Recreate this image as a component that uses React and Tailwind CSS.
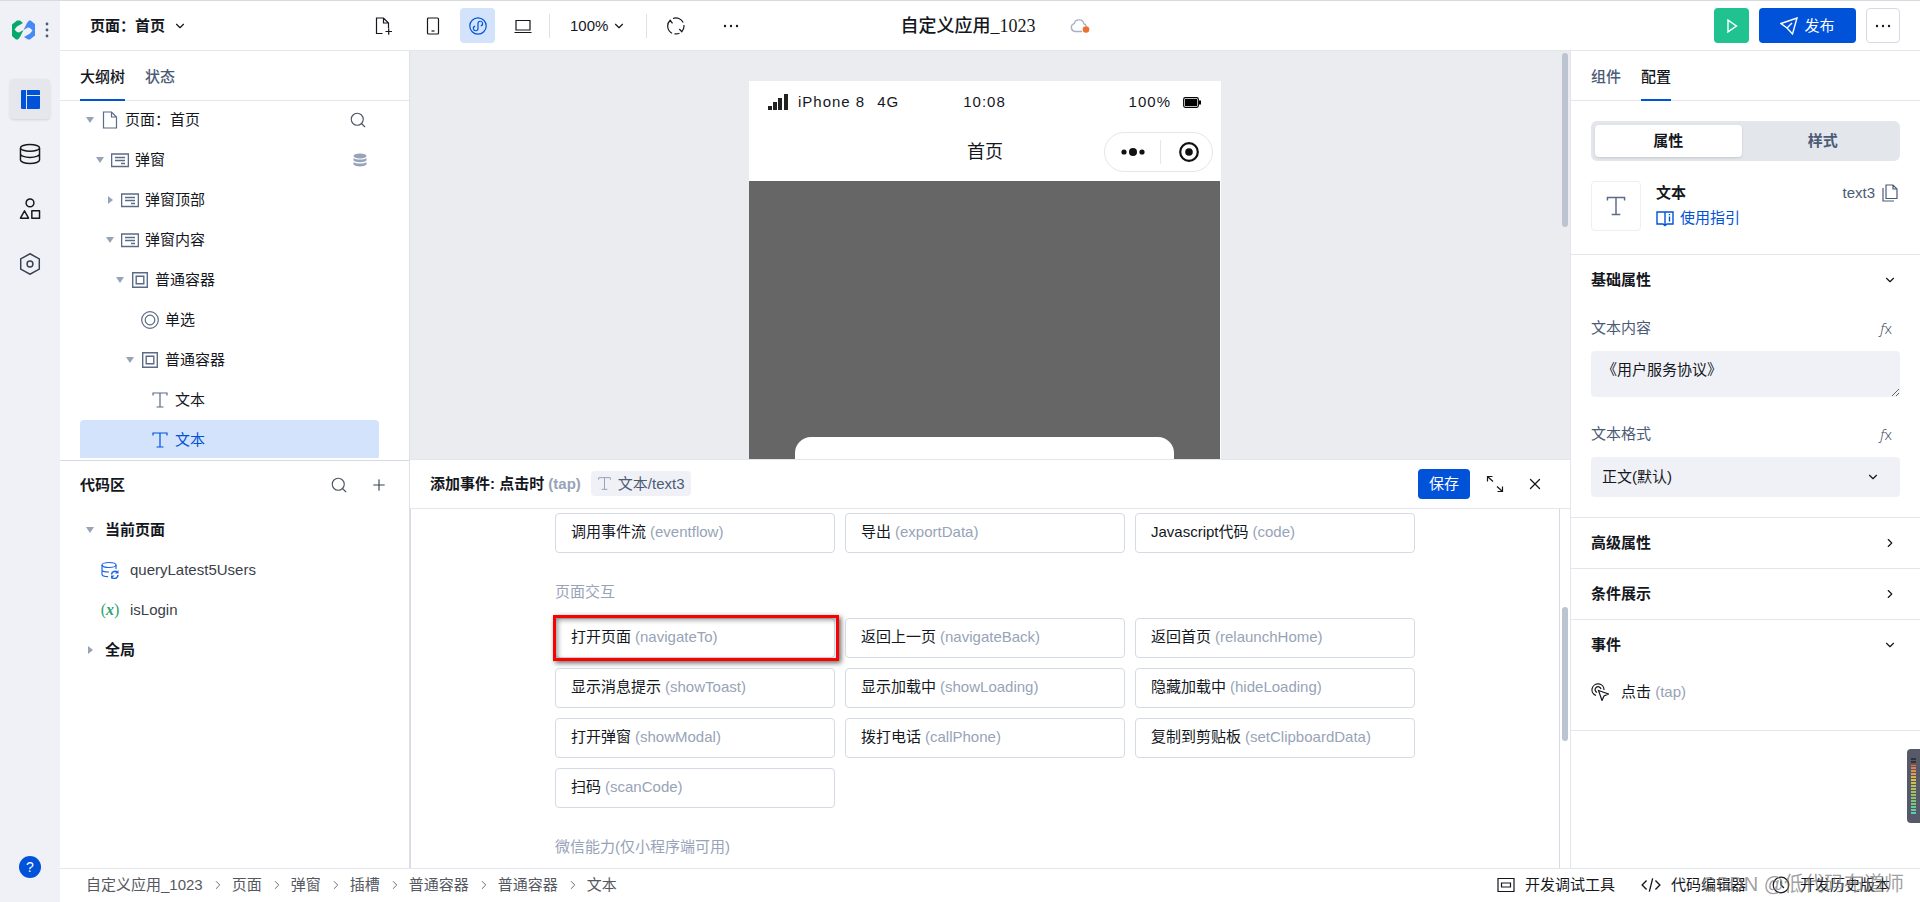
import {
  ChevronDown,
  ChevronRight,
  Plus,
  Search,
  X,
} from "lucide-react";

const tree = [
  { level: 0, icon: "page", label: "页面：首页", caret: "down", action: "search" },
  { level: 1, icon: "slot", label: "弹窗", caret: "down", action: "data" },
  { level: 2, icon: "slot", label: "弹窗顶部", caret: "right" },
  { level: 2, icon: "slot", label: "弹窗内容", caret: "down" },
  { level: 3, icon: "box", label: "普通容器", caret: "down" },
  { level: 4, icon: "radio", label: "单选" },
  { level: 4, icon: "box", label: "普通容器", caret: "down" },
  { level: 5, icon: "text", label: "文本" },
  { level: 5, icon: "text", label: "文本", active: true },
];

const flowActions = [
  ["调用事件流", "eventflow"],
  ["导出", "exportData"],
  ["Javascript代码", "code"],
];

const pageActions = [
  ["打开页面", "navigateTo"],
  ["返回上一页", "navigateBack"],
  ["返回首页", "relaunchHome"],
  ["显示消息提示", "showToast"],
  ["显示加载中", "showLoading"],
  ["隐藏加载中", "hideLoading"],
  ["打开弹窗", "showModal"],
  ["拨打电话", "callPhone"],
  ["复制到剪贴板", "setClipboardData"],
  ["扫码", "scanCode"],
];

const crumbs = ["自定义应用_1023", "页面", "弹窗", "插槽", "普通容器", "普通容器", "文本"];

const Caret = ({ dir }) => (
  <svg width="8" height="8" viewBox="0 0 8 8" className="fill-[#97a3b7]">
    {dir === "down" ? <path d="M0 1h8L4 7z" /> : <path d="M2 0v8l5-4z" />}
  </svg>
);

const Icon = ({ size = 18, children, className = "" }) => (
  <svg
    width={size}
    height={size}
    viewBox="0 0 18 18"
    fill="none"
    stroke="currentColor"
    strokeWidth="1.2"
    className={className}
  >
    {children}
  </svg>
);

const TextIcon = ({ size, className }) => (
  <Icon size={size} className={className}>
    <path d="M2 4.5V2h14v2.5M9 2v14M5.5 16h7" />
  </Icon>
);

const treeIcons = {
  page: (
    <Icon>
      <path d="M2.5 1h8L15.5 6v11h-13zM10.5 1v5h5" />
    </Icon>
  ),
  slot: (
    <Icon>
      <path d="M.6 3h16.8v12.5H.6zM4 6.5h10M4 9.5h10M10 12.5h4" strokeWidth="1.4" />
    </Icon>
  ),
  box: (
    <Icon>
      <path d="M1.7 1.7h14.6v14.6H1.7zM5.2 5.2h7.6v7.6H5.2z" strokeWidth="1.4" />
    </Icon>
  ),
  radio: (
    <Icon>
      <circle cx="9" cy="9" r="8.3" />
      <circle cx="9" cy="9" r="4.8" />
    </Icon>
  ),
  text: <TextIcon />,
};

const Rail = () => (
  <nav className="flex w-[60px] shrink-0 flex-col items-center bg-[#f0f1f6] pb-6">
    <div className="flex h-[57px] w-full items-center gap-[10px] pl-3">
      <svg width="23" height="20" viewBox="0 0 23 20">
        <path d="M0 4.500 5 .5h3l3 2.500-6 3.500L2.500 9.500 5 12l2 .5 4.500-2.500L8 17l-2 2.500H4L0 16z" fill="#07a86b" />
        <path d="M23 15.500l-5 4h-2l-4-2.500 6-3.500 2.500-3L18 8l-2-.5-4.500 2.500L15 3l2-2.500h1.500L23 4z" fill="#468af5" />
      </svg>
      <svg width="4" height="16" viewBox="0 0 4 16" fill="#4b5b76">
        <circle cx="2" cy="2" r="1.4" />
        <circle cx="2" cy="8" r="1.4" />
        <circle cx="2" cy="14" r="1.4" />
      </svg>
    </div>
    <div className="mt-[21px] flex flex-col gap-[15px]">
      <button
        aria-label="页面设计"
        className="flex h-10 w-10 items-center justify-center rounded bg-[#e5e7ed] shadow"
      >
        <svg width="19" height="19" viewBox="0 0 19 19" fill="#0052d9">
          <path d="M1 0h4v19H1a1 1 0 0 1-1-1V1a1 1 0 0 1 1-1zM6 0h12a1 1 0 0 1 1 1v4H6zM6 6h13v12a1 1 0 0 1-1 1H6z" />
        </svg>
      </button>
      <button aria-label="数据" className="flex h-10 w-10 items-center justify-center">
        <Icon size={22}>
          <ellipse cx="9" cy="4" rx="7.800" ry="2.800" />
          <path d="M1.200 4v10c0 1.500 3.500 2.800 7.800 2.800s7.800-1.300 7.800-2.800V4M1.200 9c0 1.500 3.500 2.800 7.800 2.800s7.800-1.300 7.800-2.800" />
        </Icon>
      </button>
      <button aria-label="组件" className="flex h-10 w-10 items-center justify-center">
        <Icon size={22}>
          <circle cx="9" cy="4" r="3.200" />
          <path d="M4.500 10.500 1.200 16.500h6.600zM10.500 10.500h6.300v6h-6.300z" strokeLinejoin="round" />
        </Icon>
      </button>
      <button aria-label="设置" className="flex h-10 w-10 items-center justify-center">
        <Icon size={22} className="text-gray-700">
          <path d="M9 .6l7.600 4.200v8.400L9 17.400l-7.600-4.200V4.800z" />
          <circle cx="9" cy="9" r="2.400" />
        </Icon>
      </button>
    </div>
    <button
      aria-label="帮助"
      className="mt-auto flex h-[22px] w-[22px] items-center justify-center rounded-full bg-[#0052d9] text-sm text-white"
    >
      ?
    </button>
  </nav>
);

const ToolButton = ({ label, active, children }) => (
  <button
    aria-label={label}
    className={
      active
        ? "flex h-[35px] w-[35px] items-center justify-center rounded bg-[#d4e3fc] text-[#0052d9]"
        : "flex h-[35px] w-[35px] items-center justify-center rounded"
    }
  >
    {children}
  </button>
);

const Dots = () => (
  <svg width="16" height="4" viewBox="0 0 16 4" fill="currentColor">
    <circle cx="2" cy="2" r="1.2" />
    <circle cx="8" cy="2" r="1.2" />
    <circle cx="14" cy="2" r="1.2" />
  </svg>
);

const Header = () => (
  <header className="grid h-[50px] shrink-0 grid-cols-[1fr_auto_1fr] items-center border-b border-[#e3e6eb] bg-white pr-5 pl-[30px]">
    <div className="flex items-center">
      <button className="flex w-[276px] items-center gap-2 font-semibold">
        页面：首页
        <ChevronDown size={14} strokeWidth={2} />
      </button>
      <ToolButton label="新建页面">
        <Icon>
          <path d="M7.500 16.500H1.500V1h7L13.500 6v5M8.500 1v5h5M10.500 14.500h6.500M13.700 11.300v6.400" />
        </Icon>
      </ToolButton>
      <div className="ml-[14px] flex gap-[10px]">
        <ToolButton label="手机">
          <Icon>
            <rect x="3.500" y="1" width="11" height="16" rx="1" />
            <path d="M7.500 14h3" />
          </Icon>
        </ToolButton>
        <ToolButton label="小程序" active>
          <Icon>
            <circle cx="9" cy="9" r="8.200" />
            <path d="M9 11.500V6.500a2.300 2.300 0 1 1 2.800 2.300M9 6.500v5a2.300 2.300 0 1 1-2.800-2.300" />
          </Icon>
        </ToolButton>
        <ToolButton label="电脑">
          <Icon>
            <path d="M2 3.500h14v9.500H2zM.5 15.500h17" />
          </Icon>
        </ToolButton>
      </div>
      <span className="ml-[9px] h-6 w-px bg-[#dde0e7]" />
      <button className="ml-5 flex items-center gap-1">
        100%
        <ChevronDown size={14} strokeWidth={2} />
      </button>
      <span className="ml-5 h-6 w-px bg-[#dde0e7]" />
      <div className="ml-[11px] flex gap-5">
        <ToolButton label="刷新">
          <Icon>
            <path d="M5 16.200A8 8 0 0 1 3.200 3.300M6 1.500a8 8 0 0 1 10.200 4M16.900 8a8 8 0 0 1-2.100 6.700M12.500 16.200a8 8 0 0 1-5 .6M1 6.300 3.200 3.300l2.300 3M16.700 11.500l-1.900 3.200-2.500-2.700" />
          </Icon>
        </ToolButton>
        <ToolButton label="更多工具">
          <Dots />
        </ToolButton>
      </div>
    </div>
    <div className="flex items-center gap-[34px]">
      <h1 className="font-['Liberation_Serif','Noto_Sans_CJK_SC',serif] text-lg font-medium">
        自定义应用_1023
      </h1>
      <svg width="20" height="16" viewBox="0 0 20 16">
        <path
          d="M12 13.500H5a4 4 0 0 1-.8-7.800A5 5 0 0 1 14 6a3.500 3.500 0 0 1 2.300 2"
          fill="none"
          stroke="#a6b1c5"
          strokeWidth="1.4"
        />
        <circle cx="16" cy="11.500" r="3.300" fill="#ed7033" />
      </svg>
    </div>
    <div className="flex justify-end gap-[10px]">
      <button
        aria-label="预览"
        className="flex h-[35px] w-[35px] items-center justify-center rounded bg-[#20c290] text-white"
      >
        <Icon size={16}>
          <path d="M4.500 2.500v13L14 9z" strokeWidth="1.6" />
        </Icon>
      </button>
      <button className="flex h-[35px] w-[97px] items-center justify-center gap-[6px] rounded bg-[#0052d9] text-white">
        <Icon>
          <path d="M1 6.500 17 1l-4.500 16L7 11zM7 11l5-5" strokeWidth="1.4" />
        </Icon>
        发布
      </button>
      <button
        aria-label="更多"
        className="flex h-[35px] w-[34px] items-center justify-center rounded border border-[#d5dae4]"
      >
        <Dots />
      </button>
    </div>
  </header>
);

const Tabs = ({ items, active }) => (
  <div className="flex h-[50px] shrink-0 gap-5 border-b border-[#e3e6eb] px-5">
    {items.map((item) => (
      <button
        key={item}
        className={
          item === active
            ? "-mb-px border-b-2 border-[#0052d9] pt-[3px] font-medium"
            : "-mb-px border-b-2 border-transparent pt-[3px] font-medium text-[#4b5b76]"
        }
      >
        {item}
      </button>
    ))}
  </div>
);

const TreeRow = ({ level, icon, label, caret, action, active }) => (
  <li
    className={
      active
        ? "flex h-10 items-center rounded bg-[#d4e3fc] pr-3 text-[#0052d9]"
        : "flex h-10 items-center pr-3"
    }
    style={{ paddingLeft: level * 10 }}
  >
    <span className="flex w-5 justify-center">{caret && <Caret dir={caret} />}</span>
    <span className={active ? "mr-[5px] flex w-5 justify-center" : "mr-[5px] flex w-5 justify-center text-[#5b6b86]"}>
      {treeIcons[icon]}
    </span>
    {label}
    {action === "search" && (
      <button aria-label="搜索组件" className="ml-auto text-gray-600">
        <Search size={18} strokeWidth={1.5} />
      </button>
    )}
    {action === "data" && (
      <svg width="14" height="14" viewBox="0 0 14 14" className="ml-auto fill-[#97a3b7]">
        <ellipse cx="7" cy="3" rx="6.500" ry="2.500" />
        <path d="M.5 5c2 2 11 2 13 0v2.500c-2 2.300-11 2.300-13 0zM.5 9c2 2 11 2 13 0v2.500c-2 2.500-11 2.500-13 0z" />
      </svg>
    )}
  </li>
);

const Sidebar = () => (
  <aside className="flex w-[350px] shrink-0 flex-col border-r border-[#dde0e7] bg-white">
    <section className="flex h-1/2 flex-col overflow-hidden">
      <Tabs items={["大纲树", "状态"]} active="大纲树" />
      <ul className="-mt-px mr-[30px] mb-[2px] ml-5 overflow-hidden">
        {tree.map((row, i) => (
          <TreeRow key={i} {...row} />
        ))}
      </ul>
    </section>
    <section className="flex-1 border-t border-[#d5dae4] px-5">
      <div className="flex h-[49px] items-center">
        <h2 className="font-semibold">代码区</h2>
        <button aria-label="搜索代码" className="ml-auto text-gray-600">
          <Search size={18} strokeWidth={1.5} />
        </button>
        <button aria-label="新增代码" className="mr-px ml-[22px] text-gray-700">
          <Plus size={18} strokeWidth={1.5} />
        </button>
      </div>
      <ul>
        <li className="flex h-10 items-center font-semibold">
          <span className="mr-[5px] flex w-5 justify-center">
            <Caret dir="down" />
          </span>
          当前页面
        </li>
        <li className="flex h-10 items-center pl-5 text-[#3a3f49]">
          <span className="mr-[10px] flex w-5 justify-center text-[#1f66e5]">
            <Icon>
              <ellipse cx="8" cy="4" rx="7" ry="2.500" />
              <path d="M1 4v9.500c0 1 2.500 2 6 2.200M15 4v4M1 9c0 1.200 3 2 7 2" />
              <path d="M10.500 13.500a3.500 3.500 0 0 1 6-2M17 14a3.500 3.500 0 0 1-6 2.500" strokeWidth="1.6" />
              <path d="M17.500 9v3.500H14zM10 18v-3.500h3.500z" fill="currentColor" stroke="none" />
            </Icon>
          </span>
          queryLatest5Users
        </li>
        <li className="flex h-10 items-center pl-5 text-[#3a3f49]">
          <span className="mr-[10px] w-5 text-center font-['Liberation_Serif',serif] text-base text-[#2ba471]">
            (<i className="font-bold">x</i>)
          </span>
          isLogin
        </li>
        <li className="flex h-10 items-center font-semibold">
          <span className="mr-[5px] flex w-5 justify-center">
            <Caret dir="right" />
          </span>
          全局
        </li>
      </ul>
    </section>
  </aside>
);

const Phone = () => (
  <div className="flex w-[472px] flex-col bg-white">
    <div className="grid h-[42px] grid-cols-3 items-center pr-5 pl-[19px] tracking-[1px]">
      <span className="flex items-center gap-[10px]">
        <svg width="20" height="16" viewBox="0 0 20 16" className="fill-[#222]">
          <path d="M0 12h4v4H0zM5 8h4v8H5zM10 4h4v12h-4zM16 0h4v16h-4z" />
        </svg>
        <span className="flex gap-3">
          <span>iPhone 8</span>
          <span>4G</span>
        </span>
      </span>
      <span className="text-center">10:08</span>
      <span className="flex items-center justify-end gap-3">
        100%
        <svg width="18" height="11" viewBox="0 0 18 11">
          <rect x=".7" y=".7" width="14.600" height="9.600" rx="1.500" fill="none" stroke="#000" strokeWidth="1.2" />
          <path d="M2 2h12v7H2zM16 3.500h2v4h-2z" />
        </svg>
      </span>
    </div>
    <div className="grid h-[58px] grid-cols-3 items-center px-2">
      <span className="col-start-2 text-center text-lg">首页</span>
      <div className="flex h-10 w-[109px] items-center justify-self-end rounded-full border border-[#e5e5ea]">
        <span className="flex w-[55px] justify-center">
          <svg width="24" height="10" viewBox="0 0 24 10" className="fill-[#111]">
            <circle cx="3" cy="5" r="2.600" />
            <circle cx="12" cy="5" r="4" />
            <circle cx="21" cy="5" r="2.600" />
          </svg>
        </span>
        <span className="h-6 w-px bg-[#e5e5ea]" />
        <span className="flex flex-1 justify-center pl-1">
          <svg width="20" height="20" viewBox="0 0 20 20">
            <circle cx="10" cy="10" r="8.800" fill="none" stroke="#111" strokeWidth="2.2" />
            <circle cx="10" cy="10" r="3.800" fill="#111" />
          </svg>
        </span>
      </div>
    </div>
    <div className="mr-px flex flex-1 items-end bg-[#666] px-[46px]">
      <div className="h-[22px] flex-1 rounded-t-2xl bg-white" />
    </div>
  </div>
);

const ActionCard = ({ name, code, marked }) => (
  <button className="relative flex h-10 items-center gap-1 rounded border border-[#d5dae4] px-[15px] pb-[2px]">
    {name}
    <span className="text-[#97a3b7]">({code})</span>
    {marked && (
      <span className="absolute -inset-y-1 -right-[5px] -left-[3px] border-3 border-[#fb0000] shadow-[2px_2px_5px_rgba(0,0,0,0.6),inset_2px_2px_5px_rgba(0,0,0,0.4)]" />
    )}
  </button>
);

const EventPanel = () => (
  <section className="flex min-h-0 flex-1 flex-col border-t border-[#e3e6eb] bg-white">
    <div className="flex h-[49px] shrink-0 items-center border-b border-[#e3e6eb] pr-[26px] pl-5">
      <h2 className="font-semibold">
        添加事件: 点击时 <span className="text-[#97a3b7]">(tap)</span>
      </h2>
      <span className="ml-[10px] flex h-[25px] items-center gap-[6px] rounded bg-[#f0f1f6] px-[6px] text-[#4b5b76]">
        <TextIcon size={15} className="text-[#97a3b7]" />
        文本/text3
      </span>
      <button className="ml-auto h-[30px] w-[52px] rounded bg-[#0052d9] text-white">
        保存
      </button>
      <button aria-label="展开" className="ml-4">
        <Icon>
          <path d="M1.500 6.500v-5h5M1.500 1.500l5.500 5M16.500 11.500v5h-5M16.500 16.500l-5.500-5" />
        </Icon>
      </button>
      <button aria-label="关闭" className="ml-[22px]">
        <X size={18} strokeWidth={1.7} />
      </button>
    </div>
    <div className="flex min-h-0 flex-1">
      <div className="flex-1 overflow-hidden border-x border-[#d5dae4] pt-1">
        <div className="mx-auto w-[860px]">
          <div className="grid grid-cols-3 gap-[10px]">
            {flowActions.map(([name, code]) => (
              <ActionCard key={code} name={name} code={code} />
            ))}
          </div>
          <h3 className="mt-7 mb-[15px] text-[#97a3b7]">页面交互</h3>
          <div className="grid grid-cols-3 gap-[10px]">
            {pageActions.map(([name, code]) => (
              <ActionCard key={code} name={name} code={code} marked={code === "navigateTo"} />
            ))}
          </div>
          <h3 className="mt-7 mb-[15px] text-[#97a3b7]">微信能力(仅小程序端可用)</h3>
        </div>
      </div>
      <div className="w-[10px] px-[2px] pt-[98px]">
        <div className="h-[134px] rounded-full bg-[#bbc4d0]" />
      </div>
    </div>
  </section>
);

const SectionHead = ({ title, open }) => (
  <h2 className="flex h-[50px] items-center justify-between px-5 font-semibold">
    {title}
    <button aria-label={title} className="mr-[3px]">
      {open ? <ChevronDown size={14} strokeWidth={2} /> : <ChevronRight size={14} strokeWidth={2} />}
    </button>
  </h2>
);

const Fx = () => (
  <button
    aria-label="绑定表达式"
    className="mr-2 h-[22px] font-['Open_Sans',sans-serif] leading-5 font-light text-gray-700"
  >
    <i>f</i>x
  </button>
);

const ConfigPanel = () => (
  <aside className="w-[350px] shrink-0 overflow-hidden border-l border-[#e3e6eb] bg-white">
    <Tabs items={["组件", "配置"]} active="配置" />
    <section className="border-b border-[#e3e6eb] px-5 pt-5 pb-[23px]">
      <div className="grid h-10 grid-cols-2 rounded-md bg-[#e3e6eb] p-1 font-semibold">
        <button className="mr-1 rounded-sm bg-white shadow-sm">属性</button>
        <button className="pl-1 text-[#4b5b76]">样式</button>
      </div>
      <div className="mt-5 flex">
        <span className="flex h-[50px] w-[50px] items-center justify-center rounded border border-[#edeff3] text-[#5b6b86]">
          <TextIcon size={22} />
        </span>
        <div className="ml-[15px] pt-px">
          <h2 className="font-semibold">文本</h2>
          <a href="#guide" className="mt-[3px] flex items-center gap-[6px] text-[#0052d9]">
            <Icon>
              <path d="M9 3v13M9 3H1v12h6l2 1.500L11 15h6V3zM13.500 7.500v5M13.500 5v1.200" strokeWidth="1.4" />
            </Icon>
            使用指引
          </a>
        </div>
        <span className="ml-auto flex h-6 items-center gap-[6px] pr-px text-[#4b5b76]">
          text3
          <Icon>
            <path d="M5 1h7l4 4v9.500H5zM12 1v4h4M2 4v13h11" />
          </Icon>
        </span>
      </div>
    </section>
    <section className="border-b border-[#e3e6eb] pb-5">
      <SectionHead title="基础属性" open />
      <div className="px-5 pt-3">
        <div className="flex justify-between">
          <label htmlFor="content" className="text-[#4b5b76]">
            文本内容
          </label>
          <Fx />
        </div>
        <textarea
          id="content"
          defaultValue="《用户服务协议》"
          className="mt-3 block h-[46px] w-full rounded bg-[#f0f1f6] px-[11px] py-2"
        />
        <div className="mt-[26px] flex justify-between">
          <label htmlFor="format" className="text-[#4b5b76]">
            文本格式
          </label>
          <Fx />
        </div>
        <div className="relative mt-3">
          <select id="format" className="block h-10 w-full appearance-none rounded bg-[#f0f1f6] px-[11px]">
            <option>正文(默认)</option>
          </select>
          <ChevronDown size={14} strokeWidth={2} className="pointer-events-none absolute top-[13px] right-5" />
        </div>
      </div>
    </section>
    <section className="border-b border-[#e3e6eb]">
      <SectionHead title="高级属性" />
    </section>
    <section className="border-b border-[#e3e6eb]">
      <SectionHead title="条件展示" />
    </section>
    <section className="border-b border-[#e3e6eb] pb-[27px]">
      <SectionHead title="事件" open />
      <div className="flex items-center px-5 pt-[11px]">
        <Icon className="mr-3">
          <path d="M7.500 7.500 17.500 11l-4.500 2-2 4.500zM5 12.500a6 6 0 1 1 8-5.500M6 9.500a3 3 0 1 1 4-3.500" />
        </Icon>
        点击&nbsp;<span className="text-[#97a3b7]">(tap)</span>
      </div>
    </section>
  </aside>
);

const Footer = () => (
  <footer className="relative flex h-[34px] shrink-0 items-center border-t border-[#e3e6eb] bg-white pr-[30px] pb-[2px] pl-[26px]">
    <ol className="flex items-center text-[#55585f]">
      {crumbs.map((crumb, i) => (
        <li key={i} className="flex items-center">
          {i > 0 && <ChevronRight size={14} strokeWidth={1.5} className="mr-[7px] ml-2" />}
          {crumb}
        </li>
      ))}
    </ol>
    <div className="ml-auto flex items-center gap-[26px]">
      <button className="flex items-center gap-[10px]">
        <Icon>
          <path d="M1 2.500h16v13H1zM4.500 7h9v4h-9z" />
        </Icon>
        开发调试工具
      </button>
      <button className="flex items-center gap-[10px]">
        <Icon size={20}>
          <path d="M5 5 1 9l4 4M13 5l4 4-4 4M10.500 3l-3 12" />
        </Icon>
        代码编辑器
      </button>
      <button className="flex items-center gap-[10px]">
        <Icon>
          <circle cx="9" cy="9" r="7.800" />
          <path d="M9 4.500V9l3 3" />
        </Icon>
        开发历史版本
      </button>
    </div>
    <span className="absolute right-4 bottom-1 text-xl text-[#777]/70">CSDN @低代码布道师</span>
  </footer>
);

const App = () => {
  return (
    <div className="flex h-screen overflow-hidden border-t border-[#d8dade] font-['Liberation_Sans','Noto_Sans_CJK_SC',sans-serif] text-[15px] leading-[22px] text-[#14171d]">
      <Rail />
      <div className="flex min-w-0 flex-1 flex-col">
        <Header />
        <div className="flex min-h-0 flex-1">
          <Sidebar />
          <main className="flex min-w-0 flex-1 flex-col bg-[#ebecf0]">
            <div className="flex h-[calc(50%-1px)]">
              <div className="flex flex-1 justify-center pt-[30px]">
                <Phone />
              </div>
              <div className="w-[10px] px-[2px] pt-[2px]">
                <div className="h-[174px] rounded-full bg-[#bbc4d0]" />
              </div>
            </div>
            <EventPanel />
          </main>
          <ConfigPanel />
        </div>
        <Footer />
      </div>
      {/* floating level meter docked to the window edge */}
      <div className="absolute top-[749px] right-0 flex h-[74px] w-[13px] justify-center rounded-l bg-[#555968] py-2">
        <div className="w-[5px] bg-[repeating-linear-gradient(#555968_0_1px,transparent_1px_3px),linear-gradient(#333_12%,#e2714f_14%,#d9c04a_40%,#8cc069_70%,#4fd0b8)]" />
      </div>
    </div>
  );
};

export default App;
